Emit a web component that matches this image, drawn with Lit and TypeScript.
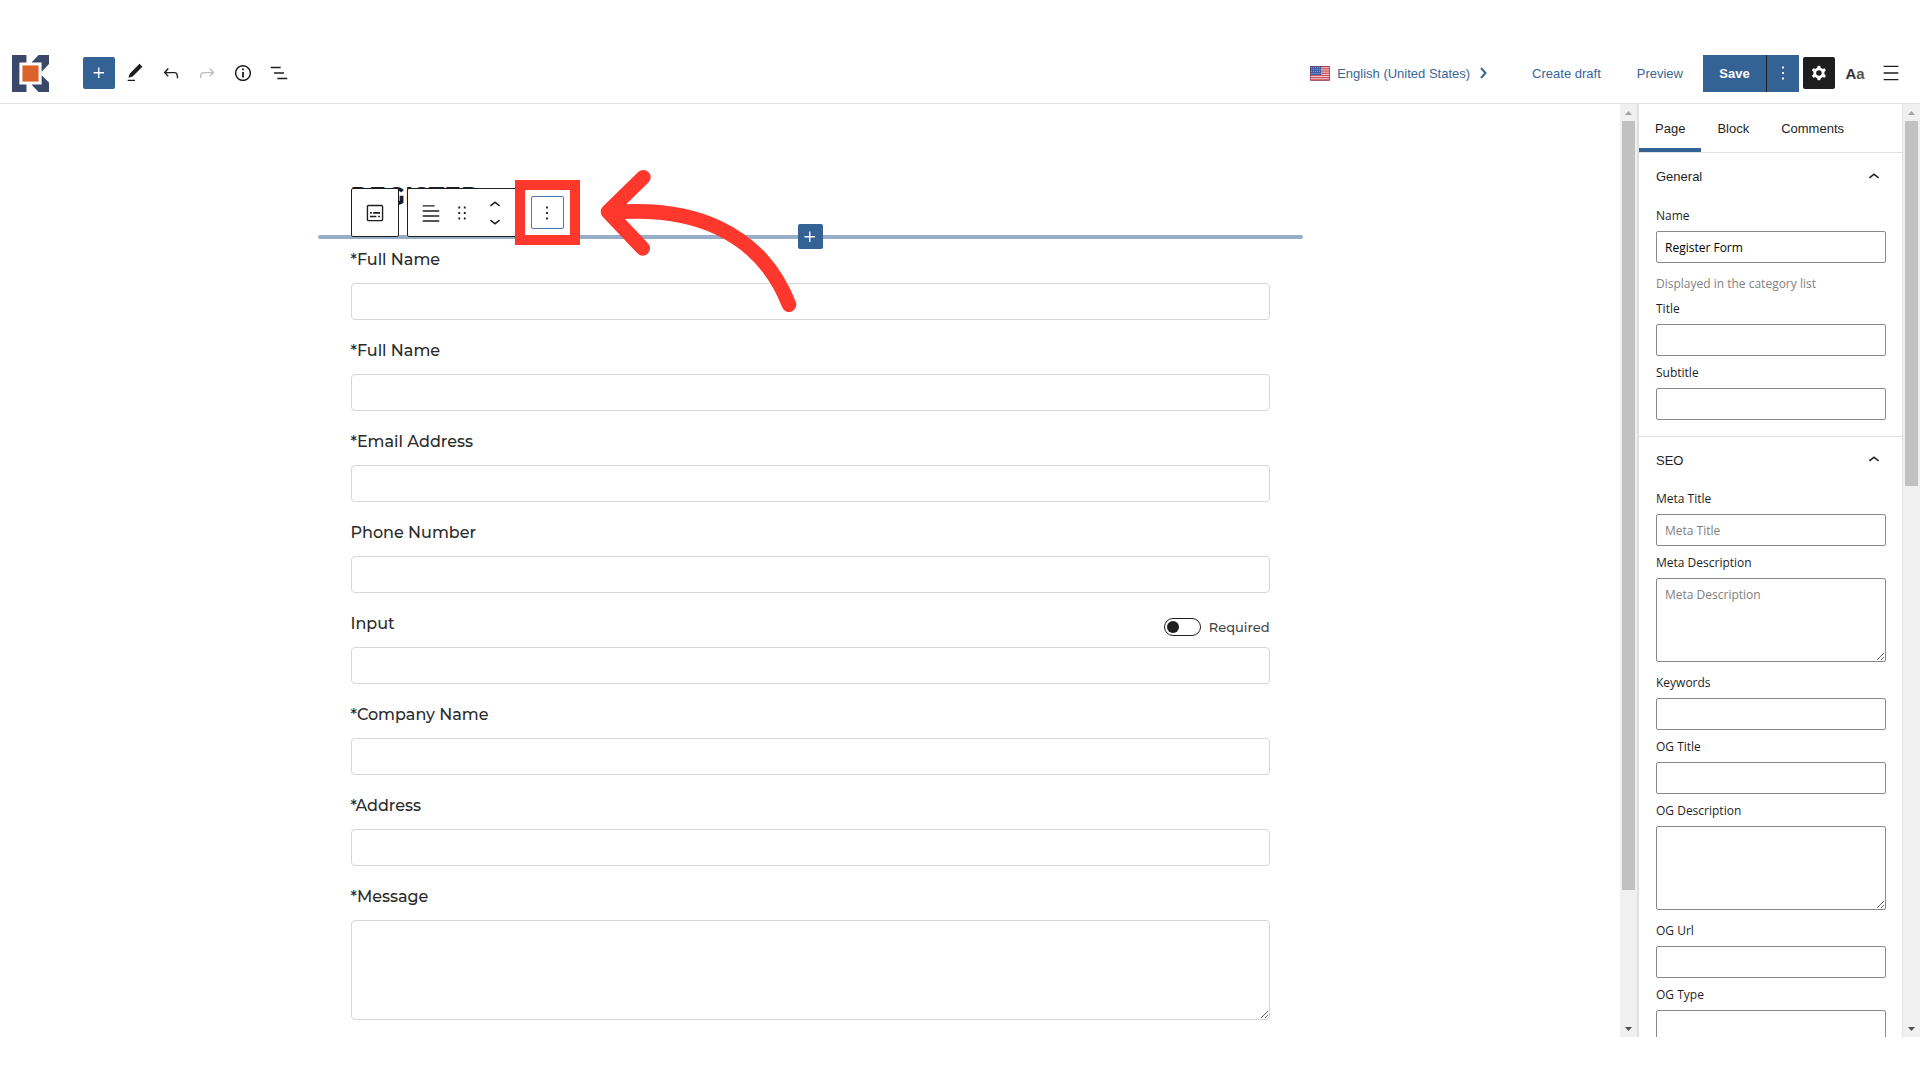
import { LitElement, html, css, svg, nothing } from "lit";
import { customElement, property } from "lit/decorators.js";

const ICONS = {
  plus: "M11 12.5V17.5H12.5V12.5H17.5V11H12.5V6H11V11H6V12.5H11Z",
  edit: "M20.1 5.1L16.9 2 6.2 12.7l-1.3 4.4 4.5-1.3L20.1 5.1zM4 20.8h8v-1.5H4v1.5z",
  undo: "M18.3 11.7c-.6-.6-1.4-.9-2.3-.9H6.7l2.9-3.3-1.1-1-4.5 5L8.5 16l1-1-2.7-2.7H16c.5 0 .9.2 1.3.5 1 1 1 3.4 1 4.5v.3h1.5v-.2c0-1.5 0-4.3-1.5-5.7z",
  redo: "M15.6 6.5l-1.1 1 2.9 3.3H8c-.9 0-1.7.3-2.3.9-1.4 1.5-1.4 4.2-1.4 5.6v.2h1.5v-.3c0-1.1 0-3.5 1-4.5.3-.3.7-.5 1.3-.5h9.2L14.5 15l1.1 1.1 4.6-4.6-4.6-5z",
  info: "M12 3.2c-4.8 0-8.8 3.9-8.8 8.8 0 4.8 3.9 8.8 8.8 8.8 4.8 0 8.8-3.9 8.8-8.8 0-4.8-4-8.8-8.8-8.8zm0 16c-4 0-7.2-3.3-7.2-7.2C4.8 8 8 4.8 12 4.8s7.2 3.3 7.2 7.2c0 4-3.2 7.2-7.2 7.2zM11 17h2v-6h-2v6zm0-8h2V7h-2v2z",
  list: "M13.8 5.2H3v1.5h10.8V5.2zm-3.6 12v1.5H21v-1.5H10.2zm7.2-6H6.6v1.5h10.8v-1.5z",
  gear: "M10.289 4.836A1 1 0 0111.275 4h1.306a1 1 0 01.987.836l.244 1.466c.787.26 1.503.679 2.108 1.218l1.393-.522a1 1 0 011.216.437l.653 1.13a1 1 0 01-.23 1.273l-1.148.944a6.025 6.025 0 010 2.435l1.149.946a1 1 0 01.23 1.272l-.653 1.13a1 1 0 01-1.216.437l-1.394-.522c-.605.54-1.32.958-2.108 1.218l-.244 1.466a1 1 0 01-.987.836h-1.306a1 1 0 01-.986-.836l-.244-1.466a5.995 5.995 0 01-2.108-1.218l-1.394.522a1 1 0 01-1.217-.436l-.653-1.131a1 1 0 01.23-1.272l1.149-.946a6.026 6.026 0 010-2.435l-1.148-.944a1 1 0 01-.23-1.272l.653-1.131a1 1 0 011.217-.437l1.393.522a5.994 5.994 0 012.108-1.218l.244-1.466zM14.929 12a3 3 0 11-6 0 3 3 0 016 0z",
  more: "M13 19h-2v-2h2v2zm0-6h-2v-2h2v2zm0-6h-2V5h2v2z",
  drag: "M8 7h2V5H8v2zm0 6h2v-2H8v2zm0 6h2v-2H8v2zm6-14v2h2V5h-2zm0 8h2v-2h-2v2zm0 6h2v-2h-2v2z",
  up: "M6.5 12.4L12 8l5.5 4.4-.9 1.2L12 10l-4.5 3.6-1-1.2z",
  down: "M17.5 11.6L12 16l-5.5-4.4.9-1.2L12 14l4.5-3.6 1 1.2z",
  menu: "M4 4v1.5h16V4H4zm0 8.8h16v-1.5H4v1.5zM4 20h16v-1.5H4V20z",
  text: "M3 3.5h13V5H3V3.5zM3 9h18v1.5H3V9zm0 5.5h18V16H3v-1.5zM3 20h18v1.5H3V20z",
  form: "M5 3h14a2 2 0 012 2v14a2 2 0 01-2 2H5a2 2 0 01-2-2V5c0-1.100.9-2 2-2zm0 1.500a.5.5 0 00-.5.5v14c0 .3.2.5.500.5h14a.5.5 0 00.5-.5V5a.5.5 0 00-.5-.5H5zM6.500 11h2v1.700h-2V11zm3.500 0h7.500v1.700H10V11zm-3.500 4h7v1.700h-7V15zm9 0h2v1.700h-2V15z",
};

const icon = (name: keyof typeof ICONS) => html`
  <svg class="icon" viewBox="0 0 24 24" aria-hidden="true">
    <path fill-rule="evenodd" fill="currentColor" d=${ICONS[name]}></path>
  </svg>
`;

const base = css`
  :host { display: block; box-sizing: border-box; }
  *, *::before, *::after { box-sizing: border-box; }
  button {
    display: inline-flex; align-items: center; justify-content: center;
    margin: 0; padding: 0; border: 0; background: none; color: inherit; font: inherit;
  }
  .icon { display: block; width: 22px; height: 22px; flex: none; }
`;

@customElement("scroll-track")
class ScrollTrack extends LitElement {
  @property({ type: Number }) size = 50;
  static styles = [base, css`
    :host { display: flex; flex-direction: column; flex: none; width: 17px; background: #f0f0f0; }
    .cap { display: flex; align-items: center; justify-content: center; height: 17px; flex: none; }
    .lane { flex: 1; min-height: 0; padding: 0 2px; }
    .thumb { background: #c1c1c1; }
    .tri { display: block; width: 7px; height: 4px; }
  `];
  render() {
    return html`
      <div class="cap"><svg class="tri" viewBox="0 0 7 4"><path d="M0 4L3.500 0L7 4z" fill="#a3a3a3"></path></svg></div>
      <div class="lane"><div class="thumb" style="height:${this.size}%"></div></div>
      <div class="cap"><svg class="tri" viewBox="0 0 7 4"><path d="M0 0L3.500 4L7 0z" fill="#505050"></path></svg></div>
    `;
  }
}

@customElement("editor-header")
class EditorHeader extends LitElement {
  static styles = [base, css`
    :host {
      display: flex; align-items: center; justify-content: space-between;
      height: 61px; padding: 0 13px 0 12px; border-bottom: 1px solid #e0e0e0;
      font-size: 13px; color: #1e1e1e;
    }
    .group { display: flex; align-items: center; gap: 4px; }
    .logo { display: block; width: 37px; height: 37px; margin-right: 30px; }
    .tool { width: 32px; height: 32px; border-radius: 2px; }
    .primary { background: #346294; color: #fff; }
    .pressed { background: #1e1e1e; color: #fff; }
    .tool:disabled { color: #bdbdbd; }
    .links { display: flex; align-items: center; gap: 36px; margin-right: 16px; color: #38659a; }
    .language { gap: 7px; padding-right: 7px; }
    .flag { display: block; width: 20px; height: 15px; }
    .next { display: block; width: 12px; height: 12px; }
    .split { display: flex; gap: 1px; height: 37px; background: #1e1e1e; }
    .save { width: 63px; background: #346294; color: #fff; font-weight: bold; }
    .options { width: 32px; background: #346294; color: #fff; }
    .type { font-size: 15px; font-weight: bold; color: #333; }
    .small { color: #555; }
  `];
  render() {
    return html`
      <div class="group">
        <svg class="logo" viewBox="0 0 110 110" role="img" aria-label="Site logo">
          <path fill="#3b4869" d="M0 0H43V22H22V88H43V110H0zM79 0H110V27L88 50V22H58zM88 60L110 82V110H79L58 88H88z"></path>
          <rect x="31" y="31" width="48" height="48" fill="#dc622c"></rect>
        </svg>
        <button class="tool primary" aria-label="Add block">${icon("plus")}</button>
        <button class="tool" aria-label="Tools">${icon("edit")}</button>
        <button class="tool" aria-label="Undo">${icon("undo")}</button>
        <button class="tool" aria-label="Redo" disabled>${icon("redo")}</button>
        <button class="tool" aria-label="Details">${icon("info")}</button>
        <button class="tool" aria-label="List view">${icon("list")}</button>
      </div>
      <div class="group">
        <div class="links">
          <button class="language">
            <svg class="flag" viewBox="0 0 20 15" aria-hidden="true">
              <rect width="20" height="15" rx="1" fill="#f0d5d9"></rect>
              ${[0, 1, 2, 3, 4, 5, 6].map((i) => svg`<rect y=${i * 2.2} width="20" height="1.300" fill="#d0525c"></rect>`)}
              <rect width="11" height="9" fill="#3c5ca8"></rect>
              ${[1, 3, 5, 7].map((y) => [1, 3, 5, 7, 9].map((x) => svg`<rect x=${x + (y % 4 === 1 ? 0 : 0.5)} y=${y} width="0.800" height="0.800" fill="#b9c8ea"></rect>`))}
              <rect x="0.500" y="0.500" width="19" height="14" rx="1" fill="none" stroke="#7b3350" stroke-opacity="0.600"></rect>
            </svg>
            <span>English (United States)</span>
            <svg class="next" viewBox="0 0 12 12" aria-hidden="true"><path d="M4 1l4.500 5L4 11" fill="none" stroke="currentColor" stroke-width="2"></path></svg>
          </button>
          <button>Create draft</button>
          <button>Preview</button>
        </div>
        <div class="split">
          <button class="save">Save</button>
          <button class="options" aria-label="Save options">${icon("more")}</button>
        </div>
        <button class="tool pressed" aria-label="Settings">${icon("gear")}</button>
        <button class="tool type" aria-label="Typography">A<span class="small">a</span></button>
        <button class="tool" aria-label="Menu">${icon("menu")}</button>
      </div>
    `;
  }
}

interface FormField { label: string; required?: boolean; multiline?: boolean; }

const FORM_FIELDS: FormField[] = [
  { label: "*Full Name" },
  { label: "*Full Name" },
  { label: "*Email Address" },
  { label: "Phone Number" },
  { label: "Input", required: true },
  { label: "*Company Name" },
  { label: "*Address" },
  { label: "*Message", multiline: true },
];

@customElement("form-canvas")
class FormCanvas extends LitElement {
  static styles = [base, css`
    :host {
      flex: 1; min-width: 0; overflow: hidden; padding: 72px 32px 0;
      font-family: Montserrat, Inter, sans-serif; color: #2b2b2b;
    }
    .column { max-width: 919px; margin: 0 auto; }
    .head { position: relative; height: 74px; }
    .title { margin: 0; padding-top: 5px; font-size: 25px; line-height: 30px; font-weight: 700; color: #16202c; }
    .inserter {
      position: absolute; left: -33px; right: -33px; top: 48px; height: 25px;
      display: flex; align-items: center; justify-content: center;
    }
    .inserter::before {
      content: ""; position: absolute; left: 0; right: 0; top: 11px; height: 4px;
      border-radius: 2px; background: #98aec8;
    }
    .add { position: relative; width: 25px; height: 25px; border-radius: 2px; background: #346294; color: #fff; }
    .toolbars { position: absolute; left: 0; top: 12px; display: flex; gap: 8px; }
    .bar {
      display: flex; align-items: center; justify-content: center; height: 49px;
      background: #fff; border: 1px solid #1e1e1e; border-radius: 2px; color: #1e1e1e;
    }
    .single { width: 48px; }
    .multi { padding: 0 7px; }
    .w32 { width: 32px; height: 32px; }
    .w30 { width: 30px; height: 32px; }
    .movers { display: flex; flex-direction: column; width: 36px; align-items: center; }
    .movers button { height: 16px; }
    .target { position: relative; margin-left: 18px; }
    .more { width: 33px; height: 33px; border: 1px solid #5079a8; border-radius: 2px; }
    .frame { position: absolute; inset: -16px; border: 10px solid #ff382d; pointer-events: none; }
    .arrow { position: absolute; left: 229px; top: -26px; width: 260px; height: 180px; pointer-events: none; z-index: 1; }
    .fields { display: flex; flex-direction: column; gap: 21px; }
    .field { display: flex; flex-direction: column; gap: 13px; }
    .row { display: flex; justify-content: space-between; align-items: flex-end; height: 20px; }
    .label { font-size: 16px; line-height: 20px; font-weight: 500; }
    .control {
      display: block; width: 100%; height: 37px; margin: 0; padding: 8px; font: inherit;
      background: #fff; border: 1px solid #d3d8df; border-radius: 4px; outline: 0;
    }
    .area { height: 100px; resize: vertical; }
    .switch { display: flex; align-items: center; gap: 8px; height: 14px; font-size: 13px; font-weight: 500; color: #444; }
    .toggle {
      appearance: none; display: flex; align-items: center; width: 37px; height: 18px; margin: 0; padding: 0 2px;
      border: 1px solid #1e1e1e; border-radius: 9px; background: #fff;
    }
    .toggle::before { content: ""; width: 12px; height: 12px; border-radius: 50%; background: #1e1e1e; }
  `];
  render() {
    return html`
      <div class="column">
        <div class="head">
          <h1 class="title">REGISTER</h1>
          <div class="inserter"><button class="add" aria-label="Insert block">${icon("plus")}</button></div>
          <div class="toolbars">
            <div class="bar single"><button class="w32" aria-label="Form block">${icon("form")}</button></div>
            <div class="bar multi">
              <button class="w32" aria-label="Align">${icon("text")}</button>
              <button class="w30" aria-label="Drag">${icon("drag")}</button>
              <div class="movers">
                <button aria-label="Move up">${icon("up")}</button>
                <button aria-label="Move down">${icon("down")}</button>
              </div>
              <div class="target">
                <button class="more" aria-label="Options">${icon("more")}</button>
                <div class="frame"></div>
              </div>
            </div>
          </div>
          <svg class="arrow" viewBox="0 0 780 540" aria-hidden="true">
            <path d="M190 82L84 185L188 295M90 188C330 165 540 240 627 464" fill="none" stroke="#ff382d" stroke-width="44" stroke-linecap="round" stroke-linejoin="round"></path>
          </svg>
        </div>
        <div class="fields">
          ${FORM_FIELDS.map((f, i) => html`
            <div class="field">
              <div class="row">
                <label class="label" for="field-${i}">${f.label}</label>
                ${f.required
                  ? html`<label class="switch"><input class="toggle" type="checkbox" role="switch" />Required</label>`
                  : nothing}
              </div>
              ${f.multiline
                ? html`<textarea class="control area" id="field-${i}"></textarea>`
                : html`<input class="control" id="field-${i}" type="text" />`}
            </div>
          `)}
        </div>
      </div>
    `;
  }
}

interface Setting { label: string; value?: string; placeholder?: string; help?: string; multiline?: boolean; }

const PANELS: { title: string; settings: Setting[] }[] = [
  {
    title: "General",
    settings: [
      { label: "Name", value: "Register Form", help: "Displayed in the category list" },
      { label: "Title" },
      { label: "Subtitle" },
    ],
  },
  {
    title: "SEO",
    settings: [
      { label: "Meta Title", placeholder: "Meta Title" },
      { label: "Meta Description", placeholder: "Meta Description", multiline: true },
      { label: "Keywords" },
      { label: "OG Title" },
      { label: "OG Description", multiline: true },
      { label: "OG Url" },
      { label: "OG Type" },
    ],
  },
];

@customElement("settings-sidebar")
class SettingsSidebar extends LitElement {
  static styles = [base, css`
    :host {
      flex: none; width: 266px; overflow: hidden; color: #1e1e1e; font-size: 13px;
      border-left: 2px solid #e0e0e0; border-right: 1px solid #e0e0e0;
    }
    .tabs { display: flex; height: 49px; border-bottom: 1px solid #e0e0e0; }
    .tab { padding: 0 16px; }
    .tab[aria-selected="true"] { box-shadow: inset 0 -4px #346294; }
    .panel + .panel .heading { border-top: 1px solid #e0e0e0; }
    .title { margin: 0; font: inherit; }
    .heading { width: 100%; height: 47px; padding: 0 17px; justify-content: space-between; }
    .settings { display: flex; flex-direction: column; gap: 9px; padding: 8px 16px 16px 17px; font-family: "Segoe UI", "Open Sans", sans-serif; font-size: 12px; line-height: 16px; }
    .setting { display: flex; flex-direction: column; gap: 7px; }
    .tall { padding-bottom: 4px; }
    .control {
      display: block; width: 100%; height: 32px; margin: 0; padding: 0 8px; font: inherit; color: #000;
      background: #fff; border: 1px solid #8a8a8a; border-radius: 2px; outline: 0;
    }
    .control::placeholder { color: #808080; opacity: 1; }
    .area { height: 84px; padding: 8px; resize: vertical; }
    .help { margin: 6px 0 0; color: #828282; }
  `];
  render() {
    return html`
      <div class="tabs" role="tablist">
        ${["Page", "Block", "Comments"].map((t, i) => html`
          <button class="tab" role="tab" aria-selected=${i === 0 ? "true" : "false"}>${t}</button>`)}
      </div>
      ${PANELS.map((p, n) => html`
        <section class="panel">
          <h2 class="title"><button class="heading" aria-expanded="true"><span>${p.title}</span>${icon("up")}</button></h2>
          <div class="settings">
            ${p.settings.map((s, i) => html`
              <div class="setting ${s.multiline ? "tall" : ""}">
                <label for="setting-${n}-${i}">${s.label}</label>
                ${s.multiline
                  ? html`<textarea class="control area" id="setting-${n}-${i}" placeholder=${s.placeholder ?? ""}></textarea>`
                  : html`<input class="control" id="setting-${n}-${i}" type="text" .value=${s.value ?? ""} placeholder=${s.placeholder ?? ""} />`}
                ${s.help ? html`<p class="help">${s.help}</p>` : nothing}
              </div>
            `)}
          </div>
        </section>
      `)}
    `;
  }
}

@customElement("app-root")
class AppRoot extends LitElement {
  static styles = [base, css`
    :host {
      display: flex; flex-direction: column; height: 100vh; padding: 43px 0; overflow: hidden;
      background: #fff; font-family: "Liberation Sans", Arial, sans-serif;
    }
    .header { flex: none; }
    .body { display: flex; flex: 1; min-height: 0; }
  `];
  render() {
    return html`
      <editor-header class="header"></editor-header>
      <main class="body">
        <form-canvas></form-canvas>
        <scroll-track .size=${85.5}></scroll-track>
        <settings-sidebar></settings-sidebar>
        <scroll-track .size=${40.6}></scroll-track>
      </main>
    `;
  }
}
